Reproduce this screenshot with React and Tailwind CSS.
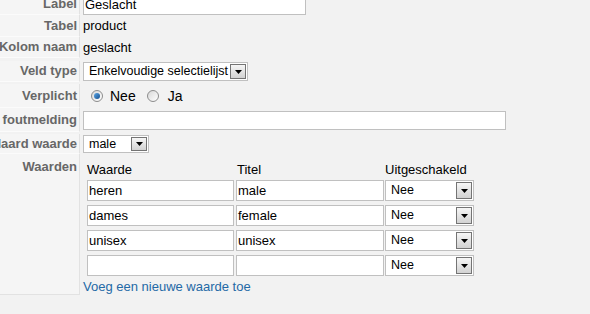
function Caret() {
  return (
    <svg width="7" height="4" viewBox="0 0 7 4" className="block">
      <path d="M0 0h7L3.5 4z" fill="#000" />
    </svg>
  )
}

function Select({ value, className }) {
  return (
    <div className={`flex bg-white border border-[#c0c0c0] p-[1px] ${className}`}>
      <span className="flex-1 flex items-center pl-[4px] whitespace-nowrap overflow-hidden text-[12.5px] text-black">
        {value}
      </span>
      <div className="w-[16px] h-full flex items-center justify-center border border-[#747474] bg-gradient-to-b from-[#f6f6f6] to-[#d2d2d2]">
        <Caret />
      </div>
    </div>
  )
}

function Radio({ checked }) {
  return (
    <div className="w-[12px] h-[12px] rounded-full border border-[#8c8c8c] bg-gradient-to-br from-[#d8d8d8] to-[#ffffff] flex items-center justify-center">
      {checked && (
        <div className="w-[6px] h-[6px] rounded-full bg-gradient-to-br from-[#5aa6e6] to-[#154f8f]" />
      )}
    </div>
  )
}

function Row({ label, className, top, children }) {
  return (
    <div className={`flex ${className}`}>
      <div
        className={`w-[80px] shrink-0 flex justify-end pr-[2px] bg-[#f5f5f5] border-r border-r-[#e2e2e2] border-b border-b-[#fbfbfb] font-bold text-[#676767] whitespace-nowrap ${top ? 'items-start pt-[3px]' : 'items-center'}`}
      >
        {label}
      </div>
      <div className={`flex-1 flex pl-[3px] ${top ? 'items-start' : 'items-center'}`}>{children}</div>
    </div>
  )
}

const waarden = [
  { waarde: 'heren', titel: 'male' },
  { waarde: 'dames', titel: 'female' },
  { waarde: 'unisex', titel: 'unisex' },
  { waarde: '', titel: '' }
]

export default function App() {
  return (
    <div className="w-[590px] h-[314px] overflow-hidden bg-[#f2f2f2] font-['Liberation_Sans',Arial,sans-serif] text-[13px] text-black">
      <div className="-mt-[8px]">
        <Row label="Label" className="h-[23px] pt-[2px]">
          <div className="w-[223px] h-[20px] bg-white border border-[#c0c0c0] pl-[1px] flex items-center">
            Geslacht
          </div>
        </Row>
        <Row label="Tabel" className="h-[22px]">
          <span>product</span>
        </Row>
        <Row label="Kolom naam" className="h-[21px]">
          <span>geslacht</span>
        </Row>
        <Row label="Veld type" className="h-[24px] pt-[3px]">
          <Select value="Enkelvoudige selectielijst" className="w-[165px] h-[19px]" />
        </Row>
        <Row label="Verplicht" className="h-[26px] pt-[2px]">
          <div className="flex items-center pl-[8px] text-[14px]">
            <Radio checked />
            <span className="ml-[7px]">Nee</span>
            <div className="ml-[11px]">
              <Radio />
            </div>
            <span className="ml-[9px]">Ja</span>
          </div>
        </Row>
        <Row label="foutmelding" className="h-[24px]">
          <div className="w-[423px] h-[19px] bg-white border border-[#c0c0c0]" />
        </Row>
        <Row label="Standaard waarde" className="h-[22px] pt-[2px]">
          <Select value="male" className="w-[66px] h-[18px]" />
        </Row>
        <div className="flex h-[141px]">
          <div className="w-[80px] shrink-0 flex justify-end items-start pt-[3px] pr-[2px] bg-[#f5f5f5] border-r border-r-[#e2e2e2] border-b border-b-[#e2e2e2] font-bold text-[#676767]">
            Waarden
          </div>
          <div className="flex-1 pl-[3px] pt-[6px]">
            <div className="pl-[4px]">
              <div className="grid grid-cols-[149px_149px_89px] h-[20px]">
                <span>Waarde</span>
                <span className="pl-[1px]">Titel</span>
                <span>Uitgeschakeld</span>
              </div>
              {waarden.map((w, i) => (
                <div
                  key={i}
                  className={`grid grid-cols-[149px_149px_89px] items-start ${i === waarden.length - 1 ? 'h-[22px]' : 'h-[25px]'}`}
                >
                  <div className="w-[147px] h-[21px] bg-white border border-[#c0c0c0] pl-[1px] flex items-center">
                    {w.waarde}
                  </div>
                  <div className="w-[148px] h-[21px] bg-white border border-[#c0c0c0] pl-[1px] flex items-center">
                    {w.titel}
                  </div>
                  <Select value="Nee" className="w-[89px] h-[21px]" />
                </div>
              ))}
            </div>
            <a href="#" className="block text-[#2469a6]">
              Voeg een nieuwe waarde toe
            </a>
          </div>
        </div>
      </div>
    </div>
  )
}
